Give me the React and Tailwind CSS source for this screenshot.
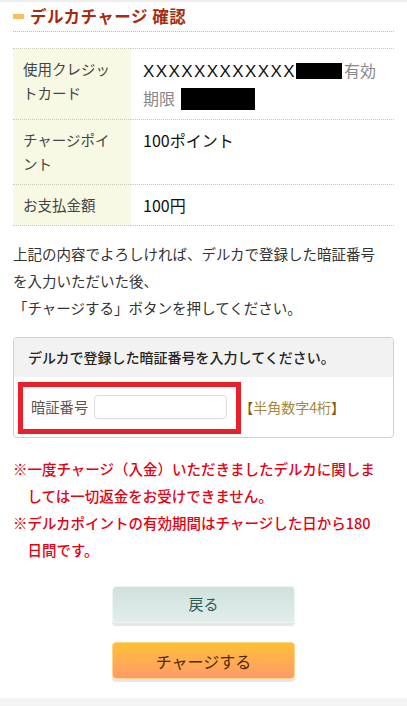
import React from 'react';

const jp = { fontFamily: '"Noto Sans CJK JP", "Noto Sans", sans-serif' };

function Row({ label, children }) {
  return (
    <tr className="border-b border-dotted border-[#c8cbb4]">
      <th className="w-[118px] bg-[#f7f9e4] pl-[10px] pr-1 py-2 text-left align-top text-[14.5px] font-normal leading-[24px] text-[#444]">
        {label}
      </th>
      <td className="pl-[12px] pr-1 py-2 align-top text-[16px] font-normal leading-[24px] text-[#111]">
        {children}
      </td>
    </tr>
  );
}

export default function App() {
  return (
    <div className="min-h-[706px] bg-white border-t-2 border-[#eeeeee]" style={jp}>
      <div className="px-[13px]">
        {/* heading */}
        <div className="flex items-center h-[30px] border-b border-dotted border-[#f0b546]">
          <span className="w-[11px] h-[5px] bg-[#fbbd5e]" />
          <h2 className="ml-[6px] text-[16.5px] font-bold tracking-[0.5px] text-[#a62c10]">デルカチャージ 確認</h2>
        </div>

        {/* summary table */}
        <table className="mt-[16px] w-full border-collapse border-t border-dotted border-[#c8cbb4]">
          <tbody>
            <Row label={<>使用クレジッ<br />トカード</>}>
              <div className="leading-[26px]">
                <span className="text-[17px] tracking-[1.4px]" style={{ fontFamily: '"Liberation Sans", sans-serif' }}>
                  XXXXXXXXXXXX
                </span>
                <span className="inline-block align-[-2px] w-[46px] h-[16px] bg-black" />
                <span className="ml-[2px] text-[#888]">有効</span>
                <br />
                <span className="text-[#888]">期限</span>
                <span className="inline-block align-[-5px] ml-[6px] w-[74px] h-[22px] bg-black" />
              </div>
            </Row>
            <Row label={<>チャージポイ<br />ント</>}>100ポイント</Row>
            <Row label="お支払金額">100円</Row>
          </tbody>
        </table>

        {/* note */}
        <p className="mt-[14px] text-[14.5px] leading-[27px] text-[#333]">
          上記の内容でよろしければ、デルカで登録した暗証番号
          <br />
          を入力いただいた後、
          <br />
          「チャージする」ボタンを押してください。
        </p>

        {/* pin box */}
        <div className="relative mt-[16px] rounded-[4px] border border-[#cfcfcf]">
          <div className="h-[39px] flex items-center pl-[14px] bg-[#f2f2f2] rounded-t-[4px] text-[14px] font-medium text-[#222]">
            デルカで登録した暗証番号を入力してください。
          </div>
          <div className="h-[60px] flex items-center pl-[17px]">
            <span className="text-[14.3px] text-[#555]">暗証番号</span>
            <input
              type="text"
              className="ml-[6px] w-[133px] h-[24px] rounded-[4px] border border-[#dcdcdc] bg-white outline-none"
            />
            <span className="ml-[12px] text-[14px] text-[#a38a3c]">
              <span className="text-[#8a5a10]">【</span>半角数字4桁<span className="text-[#8a5a10]">】</span>
            </span>
          </div>
          <div className="pointer-events-none absolute left-[4px] top-[44px] w-[223px] h-[52px] border-[5px] border-[#e8202a]" />
        </div>

        {/* warnings */}
        <div className="mt-[17px] text-[14.5px] font-medium leading-[27px] text-[#e60012]">
          <p className="pl-[1em] -indent-[1em]">
            ※一度チャージ（入金）いただきましたデルカに関しま
            <br />
            しては一切返金をお受けできません。
          </p>
          <p className="pl-[1em] -indent-[1em]">
            ※デルカポイントの有効期間はチャージした日から180
            <br />
            日間です。
          </p>
        </div>

        {/* buttons */}
        <div className="mt-[23px] flex flex-col items-center gap-[19px]">
          <button className="w-[183px] h-[37px] rounded-[4px] border border-[#eef5f3] bg-gradient-to-b from-[#cfe1de] to-[#e3edeb] text-[15px] text-[#2f5c52] shadow-[0_3px_0_#e6e6e6]">
            戻る
          </button>
          <button className="w-[183px] h-[37px] rounded-[4px] border border-[#ffd48a] bg-gradient-to-b from-[#ffc02e] to-[#ff9a66] text-[16px] text-[#4a2a05] shadow-[0_3px_0_#e6e6e6]">
            チャージする
          </button>
        </div>
      </div>
      <div className="mt-[19px] h-[10px] bg-[#f4f4f4]" />
    </div>
  );
}
